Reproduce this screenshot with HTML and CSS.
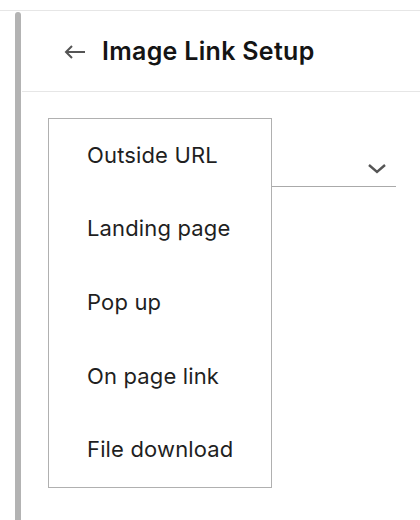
FILE: index.html
```html
<!DOCTYPE html>
<html lang="en">
<head>
<meta charset="UTF-8">
<meta name="viewport" content="width=device-width, initial-scale=1.0">
<title>Image Link Setup</title>
<link rel="stylesheet" href="styles.css">
</head>
<body>
<div class="frame">
    <div class="side-bar"></div>
    <div class="panel">
        <div class="panel-header">
            <svg class="back-icon" width="22" height="14" viewBox="0 0 22 14">
                <path d="M21 7H2M8 1L2 7l6 6" fill="none" stroke="#555" stroke-width="2"/>
            </svg>
            <h1 class="panel-title">Image Link Setup</h1>
        </div>
        <div class="panel-body">
            <div class="select-wrap">
                <div class="select-box">
                    <svg class="chevron" width="20" height="11" viewBox="0 0 20 11">
                        <path d="M2 2l8 7 8-7" fill="none" stroke="#555" stroke-width="2.4"/>
                    </svg>
                </div>
                <div class="select-menu">
                    <div class="menu-item">Outside URL</div>
                    <div class="menu-item">Landing page</div>
                    <div class="menu-item">Pop up</div>
                    <div class="menu-item">On page link</div>
                    <div class="menu-item">File download</div>
                </div>
            </div>
        </div>
    </div>
</div>
</body>
</html>
```

FILE: styles.css
```css
body {
    margin: 0;
    padding: 0;
    background-color: #fff;
    font-family: Inter, "Noto Sans", sans-serif;
    color: #1a1a1a;
}

.frame {
    margin-top: 10px;
    border-top: 1px solid #e6e6e6;
    display: flex;
    height: 509px;
    padding-left: 15px;
}

.side-bar {
    width: 6px;
    margin-top: 1px;
    background-color: #b3b3b3;
    border-radius: 3px 3px 0 0;
}

.panel {
    flex: 1;
    margin-left: 1px;
}

.panel-header {
    height: 80px;
    border-bottom: 1px solid #e6e6e6;
    display: flex;
    align-items: center;
    padding-left: 42px;
}

.back-icon {
    margin-top: 2px;
}

.panel-title {
    margin: 0 0 0 16px;
    font-size: 25px;
    font-weight: 600;
    letter-spacing: 0.3px;
    color: #141414;
}

.panel-body {
    padding: 26px 24px 0 26px;
}

.select-wrap {
    position: relative;
}

.select-box {
    height: 69px;
    border-bottom: 1px solid #aaa;
    display: flex;
    align-items: flex-start;
    justify-content: flex-end;
    padding: 45px 9px 0 0;
    box-sizing: border-box;
}

.select-menu {
    position: absolute;
    top: 0;
    left: 0;
    width: 222px;
    border: 1px solid #b0b0b0;
    background-color: #fff;
}

.menu-item {
    height: 73.6px;
    box-sizing: border-box;
    padding: 0 0 2px 38px;
    display: flex;
    align-items: center;
    font-size: 22px;
    letter-spacing: 0.15px;
    color: #1f1f1f;
}
```
